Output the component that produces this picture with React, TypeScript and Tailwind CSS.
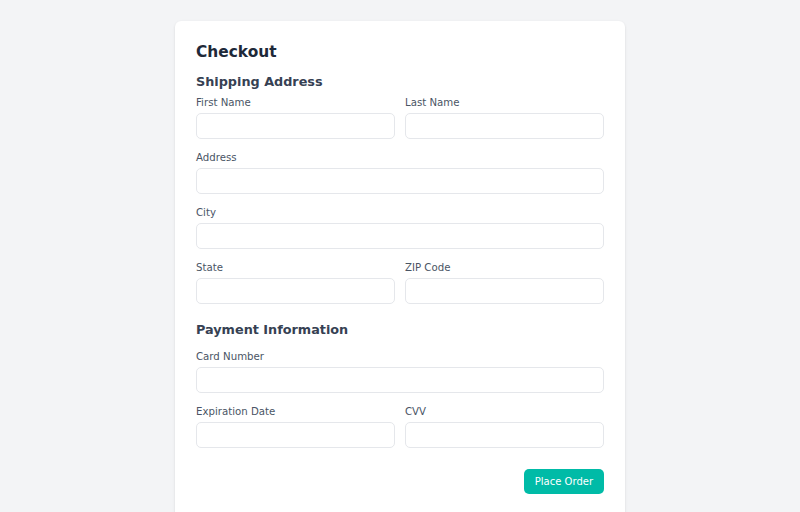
import React from "react";

interface FieldProps {
  label: string;
}

function Field({ label }: FieldProps) {
  return (
    <div className="flex min-w-0 flex-1 flex-col">
      <label className="mb-[3px] pt-[1px] text-[10.2px] leading-[14px] text-gray-600">{label}</label>
      <input
        type="text"
        className="h-[26px] w-full rounded-[5px] border border-gray-200 bg-white px-2 text-[10px] outline-none"
      />
    </div>
  );
}

export default function App() {
  return (
    <div className="h-screen overflow-hidden bg-gray-100 pt-[21px] font-['DejaVu_Sans',sans-serif]">
      <div className="mx-auto h-[520px] w-[450px] rounded-[6px] bg-white px-[21px] pt-[20px] shadow-sm">
        <h1 className="text-[15.4px] font-bold leading-[22px] text-gray-800">Checkout</h1>

        <h2 className="mt-[10px] mb-[4px] text-[12.8px] font-semibold leading-[18px] text-gray-700">Shipping Address</h2>
        <div className="flex flex-col gap-[11px]">
          <div className="flex gap-[10px]">
            <Field label="First Name" />
            <Field label="Last Name" />
          </div>
          <Field label="Address" />
          <Field label="City" />
          <div className="flex gap-[10px]">
            <Field label="State" />
            <Field label="ZIP Code" />
          </div>
        </div>

        <h2 className="mt-[17px] mb-[10px] text-[12.8px] font-semibold leading-[18px] text-gray-700">Payment Information</h2>
        <div className="flex flex-col gap-[11px]">
          <Field label="Card Number" />
          <div className="flex gap-[10px]">
            <Field label="Expiration Date" />
            <Field label="CVV" />
          </div>
        </div>

        <div className="mt-[21px] flex justify-end">
          <button className="flex h-[25px] items-center rounded-[5px] bg-teal-500 px-[11px] text-[10px] leading-[14px] text-white">
            Place Order
          </button>
        </div>
      </div>
    </div>
  );
}
